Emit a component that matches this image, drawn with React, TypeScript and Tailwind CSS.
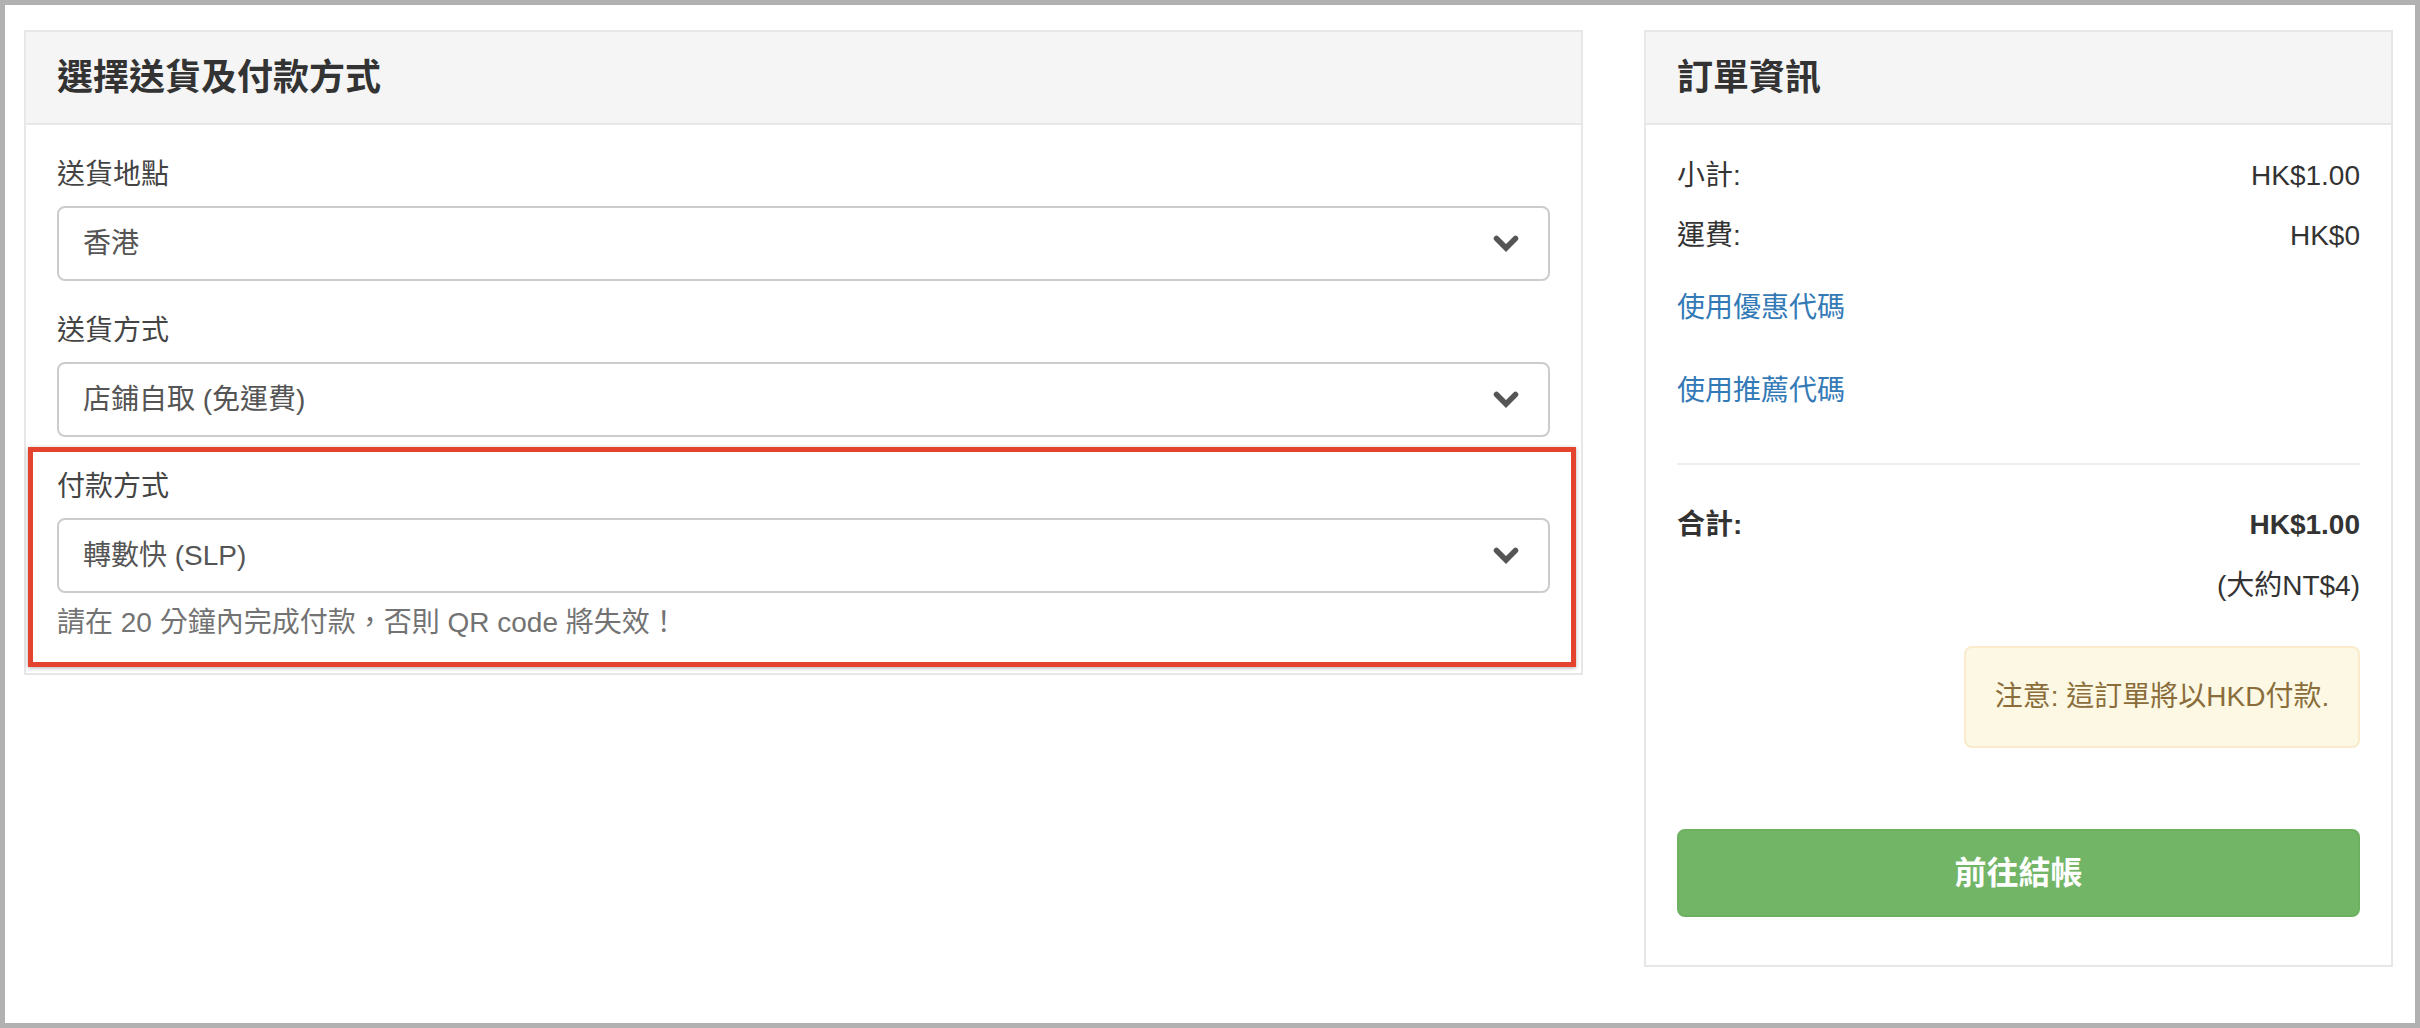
import React from "react";

const font = "font-['Liberation_Sans','Noto_Sans_CJK_TC',sans-serif]";

// Font Awesome style chevron-down
function Chevron() {
  return (
    <svg width="26" height="17" viewBox="0 0 26 17" className="shrink-0">
      <path
        d="M3.5 3.5 L13 13 L22.5 3.5"
        fill="none"
        stroke="#555555"
        strokeWidth="5.5"
        strokeLinecap="round"
        strokeLinejoin="miter"
      />
    </svg>
  );
}

function SelectBox({ value }: { value: string }) {
  return (
    <div className="h-[75px] flex items-center justify-between rounded-[8px] border-2 border-[#cccccc] bg-white pl-[24px] pr-[29px]">
      <span className="text-[28px] leading-[40px] text-[#555555]">{value}</span>
      <Chevron />
    </div>
  );
}

function FormGroup({ label, value }: { label: string; value: string }) {
  return (
    <div className="mb-[30px]">
      <label className="block text-[28px] leading-[40px] text-[#444444] mb-[11px]">{label}</label>
      <SelectBox value={value} />
    </div>
  );
}

function PanelHeader({ title }: { title: string }) {
  return (
    <div className="h-[93px] flex items-center px-[31px] bg-[#f5f5f5] border-b-2 border-[#e7e7e7]">
      <h3 className="text-[36px] font-bold text-[#333333]">{title}</h3>
    </div>
  );
}

function ShippingPanel() {
  return (
    <div className="w-[1559px] border-2 border-[#e7e7e7] bg-white">
      <PanelHeader title="選擇送貨及付款方式" />
      <div className="px-[31px] pt-[30px] pb-[30px]">
        <FormGroup label="送貨地點" value="香港" />
        <FormGroup label="送貨方式" value="店鋪自取 (免運費)" />

        {/* Payment method, highlighted */}
        <div className="relative">
          <label className="block text-[28px] leading-[40px] text-[#444444] mb-[11px]">付款方式</label>
          <SelectBox value="轉數快 (SLP)" />
          <p className="mt-[10px] text-[28px] leading-[40px] text-[#737373]">
            請在 20 分鐘內完成付款，否則 QR code 將失效！
          </p>
          <div className="absolute -left-[29px] -right-[26px] -top-[20px] -bottom-[24px] border-[5px] border-[#e4432d] shadow-[0_1px_4px_rgba(0,0,0,0.3)] pointer-events-none" />
        </div>
      </div>
    </div>
  );
}

function SummaryRow({ label, value, bold }: { label: string; value: string; bold?: boolean }) {
  return (
    <div className={`flex justify-between text-[28px] leading-[40px] text-[#333333] ${bold ? "font-bold" : ""}`}>
      <span>{label}</span>
      <span>{value}</span>
    </div>
  );
}

function OrderPanel() {
  return (
    <div className="w-[749px] border-2 border-[#e7e7e7] bg-white">
      <PanelHeader title="訂單資訊" />
      <div className="px-[31px] pt-[31px] pb-[48px]">
        <SummaryRow label="小計:" value="HK$1.00" />
        <div className="mt-[20px]">
          <SummaryRow label="運費:" value="HK$0" />
        </div>
        <a className="block mt-[32px] text-[28px] leading-[40px] text-[#337ab7]">使用優惠代碼</a>
        <a className="block mt-[43px] text-[28px] leading-[40px] text-[#337ab7]">使用推薦代碼</a>
        <div className="mt-[52px] h-[2px] bg-[#eeeeee]" />
        <div className="mt-[40px]">
          <SummaryRow label="合計:" value="HK$1.00" bold />
        </div>
        <div className="mt-[21px] text-right text-[28px] leading-[40px] text-[#333333]">(大約NT$4)</div>
        <div className="mt-[40px] flex justify-end">
          <div className="w-[396px] h-[102px] flex items-center justify-center rounded-[8px] border-2 border-[#faebcc] bg-[#fcf8e3] text-[28px] text-[#8a6d3b]">
            注意: 這訂單將以HKD付款.
          </div>
        </div>
        <button className="mt-[81px] w-full h-[88px] rounded-[8px] border-2 border-[#6cb060] bg-[#72b567] text-white text-[32px] font-bold">
          前往結帳
        </button>
      </div>
    </div>
  );
}

export default function App() {
  return (
    <div className={`${font} w-[2420px] h-[1028px] border-[5px] border-[#b1b1b1] bg-white flex items-start gap-[61px] pt-[25px] pl-[19px]`}>
      <ShippingPanel />
      <OrderPanel />
    </div>
  );
}
